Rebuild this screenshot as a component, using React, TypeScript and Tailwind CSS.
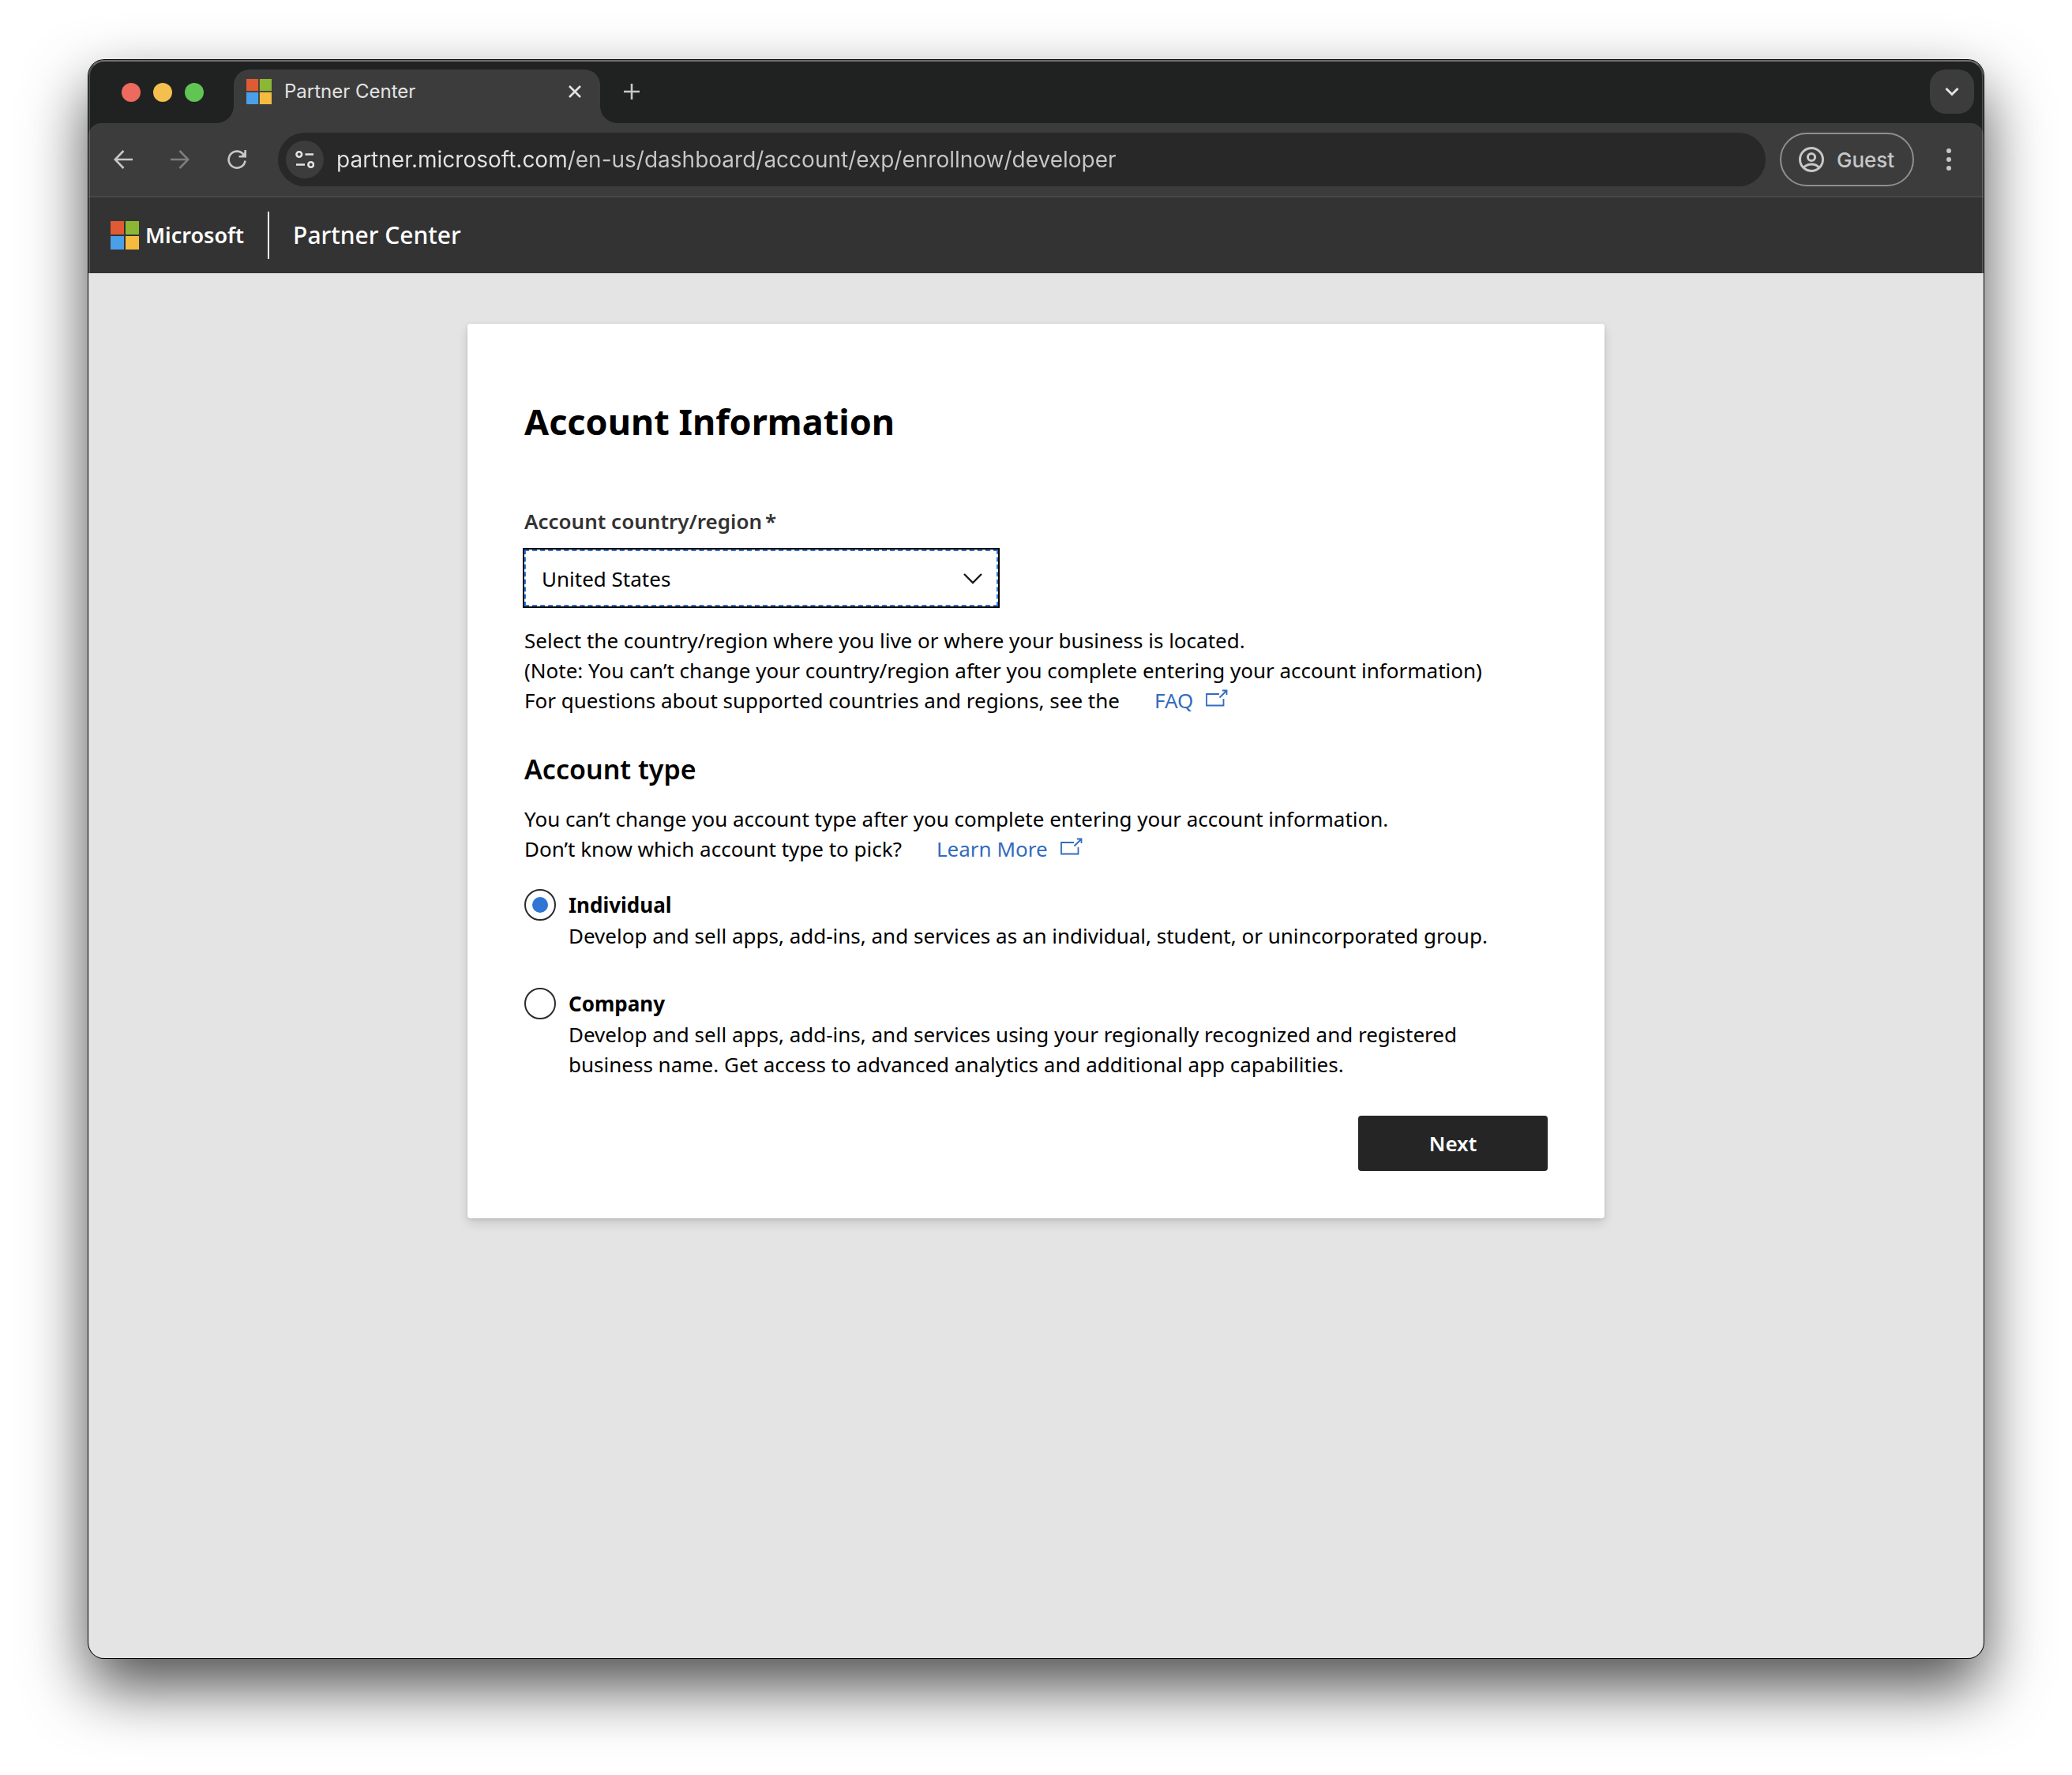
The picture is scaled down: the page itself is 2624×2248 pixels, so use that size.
import { useState } from "react";
import type { ReactNode } from "react";

function MicrosoftSquares({ className }: { className: string }) {
  return (
    <svg viewBox="0 0 36 36" className={className} aria-hidden="true">
      <rect width="17" height="17" fill="#e05a33" />
      <rect x="19" width="17" height="17" fill="#8cb735" />
      <rect y="19" width="17" height="17" fill="#4a9fe9" />
      <rect x="19" y="19" width="17" height="17" fill="#f5bb41" />
    </svg>
  );
}

function TabStrip() {
  return (
    <div className="flex h-20 items-start pt-3 pr-3">
      <div className="flex h-[58px] items-center gap-4 pl-[42px]">
        <button aria-label="Close window" className="size-6 rounded-full bg-[#ed6a5e]" />
        <button aria-label="Minimize window" className="size-6 rounded-full bg-[#f5bf4f]" />
        <button aria-label="Zoom window" className="size-6 rounded-full bg-[#61c554]" />
      </div>
      <div className="relative ml-[38px] flex h-[68px] w-[464px] items-start rounded-t-[20px] bg-[#3c3c3c]">
        <svg viewBox="0 0 22 22" className="absolute bottom-0 -left-[22px] size-[22px]" aria-hidden="true">
          <path d="M22 0v22H0A22 22 0 0 0 22 0Z" fill="#3c3c3c" />
        </svg>
        <svg viewBox="0 0 22 22" className="absolute -right-[22px] bottom-0 size-[22px]" aria-hidden="true">
          <path d="M0 0v22h22A22 22 0 0 1 0 0Z" fill="#3c3c3c" />
        </svg>
        <div className="flex h-14 flex-1 items-center pr-6 pl-4">
          <MicrosoftSquares className="size-8" />
          <span className="ml-4 flex-1 text-2xl text-[#e3e3e3]">Partner Center</span>
          <button aria-label="Close tab">
            <svg viewBox="0 0 16 16" className="size-4" fill="none" stroke="#e3e3e3" strokeWidth="2.6" aria-hidden="true">
              <path d="M1 1l14 14M15 1L1 15" />
            </svg>
          </button>
        </div>
      </div>
      <button aria-label="New tab" className="ml-[30px] flex h-14 items-center">
        <svg viewBox="0 0 20 20" className="size-5" fill="none" stroke="#c7c7c7" strokeWidth="2.6" aria-hidden="true">
          <path d="M10 0v20M0 10h20" />
        </svg>
      </button>
      <button aria-label="Search tabs" className="ml-auto flex size-14 items-center justify-center rounded-[20px] bg-[#3c3c3c]">
        <svg viewBox="0 0 18 12" className="h-3 w-[18px]" fill="none" stroke="#e3e3e3" strokeWidth="3" aria-hidden="true">
          <path d="M1.5 2L9 9.5L16.500 2" />
        </svg>
      </button>
    </div>
  );
}

function Toolbar() {
  const [url, setUrl] = useState("partner.microsoft.com/en-us/dashboard/account/exp/enrollnow/developer");
  return (
    <div className="flex h-[94px] items-center rounded-t-2xl border-b-2 border-[#474747] bg-[#3c3c3c] pr-10 pl-8">
      <div className="flex items-center gap-12">
        <button aria-label="Back">
          <svg viewBox="0 0 24 24" className="size-6" fill="none" stroke="#c7c7c7" strokeWidth="2.6" aria-hidden="true">
            <path d="M24 12H2M12.500 1L1.800 12L12.500 23" />
          </svg>
        </button>
        <button aria-label="Forward" disabled>
          <svg viewBox="0 0 24 24" className="size-6" fill="none" stroke="#7d7d7d" strokeWidth="2.600" aria-hidden="true">
            <path d="M0 12H22M11.500 1L22.200 12L11.500 23" />
          </svg>
        </button>
        <button aria-label="Reload">
          <svg viewBox="0 0 24 24" className="size-6" fill="none" stroke="#c7c7c7" strokeWidth="2.600" aria-hidden="true">
            <path d="M22.500 13.500A10.500 10.500 0 1 1 20 5.200L22 7.500" />
            <path d="M22.700 0V8.200H14.500" />
            <path d="M22.700 2V8.200H16.500Z" fill="#c7c7c7" stroke="none" />
          </svg>
        </button>
      </div>
      <div className="ml-10 flex h-[68px] flex-1 items-center rounded-full bg-[#282828] pl-2.5">
        <button aria-label="View site information" className="flex size-12 items-center justify-center rounded-full bg-[#3c3c3c]">
          <svg viewBox="0 0 24 24" className="size-6" fill="none" stroke="#e3e3e3" strokeWidth="2.600" aria-hidden="true">
            <circle cx="4.800" cy="5.500" r="3.300" />
            <path d="M12.500 5.500H23" />
            <circle cx="19.700" cy="18.500" r="3.300" />
            <path d="M1 18.500H12" />
          </svg>
        </button>
        <input
          aria-label="Address"
          value={url}
          onChange={(e) => setUrl(e.target.value)}
          className="ml-4 h-12 flex-1 bg-[linear-gradient(90deg,#e3e3e3_296px,#c7c7c7_296px)] bg-clip-text text-[28px] text-transparent outline-none"
        />
      </div>
      <button className="ml-[18px] flex h-[68px] w-[170px] items-center rounded-full border-2 border-[#8f8f8f] pl-[22px] text-[26px] font-medium text-[#c7c7c7]">
        <svg viewBox="0 0 32 32" className="mr-4 size-8" fill="none" stroke="#c7c7c7" strokeWidth="3" aria-hidden="true">
          <circle cx="16" cy="16" r="14.500" />
          <circle cx="16" cy="13" r="4.600" />
          <path d="M6.500 26C11.500 20.800 20.500 20.800 25.500 26" />
        </svg>
        Guest
      </button>
      <button aria-label="Browser menu" className="ml-[40px]">
        <svg viewBox="0 0 8 28" className="h-7 w-2" fill="#c7c7c7" aria-hidden="true">
          <circle cx="4" cy="3" r="3" />
          <circle cx="4" cy="14" r="3" />
          <circle cx="4" cy="25" r="3" />
        </svg>
      </button>
    </div>
  );
}

function SiteHeader() {
  return (
    <header className="flex h-24 items-center bg-[#333333] pl-7 font-['Noto_Sans','Open_Sans',sans-serif] font-semibold text-white">
      <a href="#microsoft" className="flex items-center gap-2 text-[27px]">
        <MicrosoftSquares className="size-9" />
        Microsoft
      </a>
      <div className="ml-[30px] h-[60px] w-0.5 bg-white" />
      <a href="#partner-center" className="ml-[30px] pb-0.5 text-[30px] font-medium">
        Partner Center
      </a>
    </header>
  );
}

function ExternalLink({ href, children }: { href: string; children: ReactNode }) {
  return (
    <a href={href} className="inline-flex items-center gap-4 text-[#316cbe]">
      {children}
      <svg viewBox="0 0 28 22" className="mb-1.5 h-[22px] w-7" fill="none" stroke="#316cbe" strokeWidth="1.800" aria-hidden="true">
        <path d="M17 6H1V20.500H22.500V12" />
        <path d="M17.500 10.500L26 2M21 1.500H26.500V7" />
      </svg>
    </a>
  );
}

interface AccountType {
  id: string;
  title: string;
  lines: string[];
}

const ACCOUNT_TYPES: AccountType[] = [
  {
    id: "individual",
    title: "Individual",
    lines: ["Develop and sell apps, add-ins, and services as an individual, student, or unincorporated group."],
  },
  {
    id: "company",
    title: "Company",
    lines: [
      "Develop and sell apps, add-ins, and services using your regionally recognized and registered",
      "business name. Get access to advanced analytics and additional app capabilities.",
    ],
  },
];

function AccountForm() {
  const [type, setType] = useState("individual");
  return (
    <form
      onSubmit={(e) => e.preventDefault()}
      className="w-full max-w-[1440px] rounded bg-white px-[72px] pt-[92px] pb-[60px] font-['Noto_Sans','Open_Sans',sans-serif] text-[26px] leading-[38px] text-black shadow-[0_6px_14px_rgba(0,0,0,0.13),0_1px_4px_rgba(0,0,0,0.11)]"
    >
      <h1 className="text-[45px] leading-[64px] font-bold">Account Information</h1>

      <label htmlFor="country" className="mt-[75px] block font-semibold text-[#333333]">
        Account country/region<span className="ml-1">*</span>
      </label>
      <div className="relative -mx-0.5 mt-[15px] w-[604px] max-w-full">
        <select
          id="country"
          defaultValue="US"
          className="h-[76px] w-full appearance-none border-2 border-black bg-white pt-0.5 pr-16 pl-[22px] outline-2 -outline-offset-4 outline-[#2f75d6] outline-dashed"
        >
          <option value="US">United States</option>
        </select>
        <svg
          viewBox="0 0 24 14"
          className="pointer-events-none absolute top-8 right-[22px] h-3.5 w-6"
          fill="none"
          stroke="#1a1a1a"
          strokeWidth="2.400"
          aria-hidden="true"
        >
          <path d="M1 1L12 12L23 1" />
        </svg>
      </div>

      <p className="mt-[22px]">
        Select the country/region where you live or where your business is located.
        <br />
        (Note: You can’t change your country/region after you complete entering your account information)
      </p>
      <p className="flex gap-11">
        For questions about supported countries and regions, see the
        <ExternalLink href="#faq">FAQ</ExternalLink>
      </p>

      <h2 className="mt-11 text-[34px] leading-[48px] font-semibold">Account type</h2>
      <p className="mt-5">You can’t change you account type after you complete entering your account information.</p>
      <p className="flex gap-11">
        Don’t know which account type to pick?
        <ExternalLink href="#learn-more">Learn More</ExternalLink>
      </p>

      <div role="radiogroup" aria-label="Account type" className="mt-8 flex flex-col gap-[47px]">
        {ACCOUNT_TYPES.map((option) => (
          <div key={option.id} className="flex gap-4">
            <input
              type="radio"
              id={option.id}
              name="account-type"
              checked={type === option.id}
              onChange={() => setType(option.id)}
              className="grid size-10 shrink-0 appearance-none place-content-center rounded-full border-2 border-[#2b2b2b] before:size-5 before:rounded-full checked:before:bg-[#2f75d6]"
            />
            <label htmlFor={option.id}>
              <span className="block leading-10 font-bold">{option.title}</span>
              {option.lines.map((line) => (
                <span key={line} className="block">
                  {line}
                </span>
              ))}
            </label>
          </div>
        ))}
      </div>

      <div className="mt-[46px] flex justify-end">
        <button type="submit" className="h-[70px] w-60 rounded bg-[#252525] font-semibold text-white">
          Next
        </button>
      </div>
    </form>
  );
}

export default function App() {
  return (
    <div className="flex min-h-screen flex-col bg-white px-28 pt-19 pb-37 font-[Inter,sans-serif]">
      <div className="flex flex-1 flex-col overflow-hidden rounded-[20px] bg-[#e4e4e4] shadow-[0_0_0_1px_#000,0_36px_80px_rgba(0,0,0,0.7)]">
        <div className="relative bg-[#202221]">
          <TabStrip />
          <Toolbar />
          <SiteHeader />
          <div className="pointer-events-none absolute inset-0 rounded-t-[20px] border-2 border-b-0 border-white/20 border-t-white/35" />
        </div>
        <main className="flex flex-1 flex-col items-center pt-16">
          <AccountForm />
        </main>
      </div>
    </div>
  );
}
